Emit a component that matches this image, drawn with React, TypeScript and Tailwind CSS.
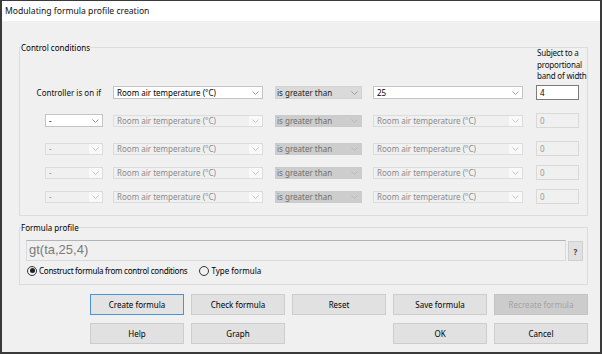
import React from "react";

type Kind = "on" | "op" | "off" | "opOff";

const Chevron = ({ color }: { color: string }) => (
  <svg width="7" height="4" viewBox="0 0 7 4">
    <path d="M0.5 0.5 L3.5 3.5 L6.5 0.5" fill="none" stroke={color} strokeWidth="1" />
  </svg>
);

const Combo = ({ text, kind, className }: { text: string; kind: Kind; className: string }) => {
  if (kind === "on") {
    return (
      <div className={`${className} h-[13px] flex items-center bg-white border border-[#c4c4c4] text-black`}>
        <span className="flex-1 pl-[3px] truncate leading-[11px]">{text}</span>
        <span className="w-[14px] flex justify-center">
          <Chevron color="#9a9a9a" />
        </span>
      </div>
    );
  }
  if (kind === "op") {
    return (
      <div className={`${className} h-[13px] flex items-center bg-[#dadada] border border-[#d2d2d2] text-[#222]`}>
        <span className="flex-1 pl-[1px] truncate leading-[11px]">{text}</span>
        <span className="w-[14px] flex justify-center">
          <Chevron color="#9a9a9a" />
        </span>
      </div>
    );
  }
  if (kind === "opOff") {
    return (
      <div className={`${className} h-[12px] flex items-center bg-[#cdcdcd] border border-[#cbcbcb] text-[#707070]`}>
        <span className="flex-1 pl-[1px] truncate leading-[10px]">{text}</span>
        <span className="w-[14px] flex justify-center">
          <Chevron color="#b8b8b8" />
        </span>
      </div>
    );
  }
  return (
    <div className={`${className} h-[12px] flex items-stretch bg-[#f0f0f0] border border-[#dcdcdc] text-[#8a8a8a]`}>
      <span className="flex-1 pl-[3px] truncate leading-[10px]">{text}</span>
      <span className="w-[13px] flex items-center justify-center bg-[#f9f9f9]">
        <Chevron color="#c4c4c4" />
      </span>
    </div>
  );
};

const Field = ({ value, on }: { value: string; on?: boolean }) => (
  <div
    className={
      on
        ? "ml-[13px] w-[43px] h-[15px] flex items-center pl-[3px] bg-white border border-[#7a7a7a] text-black"
        : "ml-[13px] w-[43px] h-[15px] flex items-center pl-[3px] bg-[#f0f0f0] border border-[#d9d9d9] text-[#9a9a9a]"
    }
  >
    {value}
  </div>
);

const Row = ({ first, on, value, className }: { first: React.ReactNode; on?: boolean; value: string; className: string }) => (
  <div className={`${className} flex items-center pl-[25px]`}>
    <div className="w-[58px] flex justify-end whitespace-nowrap">{first}</div>
    <Combo className="ml-[10px] w-[150px]" kind={on ? "on" : "off"} text="Room air temperature (°C)" />
    <Combo className="ml-[12px] w-[87px]" kind={on ? "op" : "opOff"} text="is greater than" />
    <Combo className="ml-[11px] w-[150px]" kind={on ? "on" : "off"} text={on ? "25" : "Room air temperature (°C)"} />
    <Field value={value} on={on} />
  </div>
);

const Btn = ({ label, focus, off }: { label: string; focus?: boolean; off?: boolean }) => (
  <button
    className={
      off
        ? "h-[21px] bg-[#cccccc] border border-[#c4c4c4] text-[#a3a3a3]"
        : focus
          ? "h-[21px] bg-[#e3e3e3] border border-[#4a93d6] text-black"
          : "h-[21px] bg-[#e1e1e1] border border-[#cdcdcd] text-black"
    }
  >
    {label}
  </button>
);

const Radio = ({ checked, label, tight }: { checked?: boolean; label: string; tight?: boolean }) => (
  <label className="flex items-center gap-[2px]">
    <span className="w-[10px] h-[10px] rounded-full border border-[#333] flex items-center justify-center">
      {checked && <span className="w-[5px] h-[5px] rounded-full bg-[#222]" />}
    </span>
    <span className={tight ? "tracking-[-0.25px]" : ""}>{label}</span>
  </label>
);

export default function App() {
  return (
    <div className="w-[602px] h-[354px] border-2 border-t border-[#3a3a3a] bg-[#f0f0f0] flex flex-col overflow-hidden font-['Noto_Sans',sans-serif] text-[8px] leading-[11px] text-black">
      <div className="h-[20px] shrink-0 bg-white flex items-center pl-[3px] text-[8.6px] text-[#111]">
        Modulating formula profile creation
      </div>

      <div className="flex flex-col pl-[17px] pr-[12px]">
        {/* Control conditions */}
        <div className="relative mt-[26px] h-[169px] border border-[#dcdcdc] flex flex-col">
          <span className="absolute left-[1px] -top-[6px] bg-[#f0f0f0] leading-[11px]">Control conditions</span>
          <div className="-mt-[1px] ml-[517px] whitespace-nowrap leading-[11.7px] tracking-[-0.2px] text-[#111]">
            Subject to a
            <br />
            proportional
            <br />
            band of width
          </div>
          <Row
            className="mt-[3px]"
            on
            value="4"
            first={<span className="mr-[2px] text-[#111]">Controller is on if</span>}
          />
          <Row className="mt-[13px]" value="0" first={<Combo className="w-[58px]" kind="on" text="-" />} />
          <Row className="mt-[13px]" value="0" first={<Combo className="w-[58px]" kind="off" text="-" />} />
          <Row className="mt-[9px]" value="0" first={<Combo className="w-[58px]" kind="off" text="-" />} />
          <Row className="mt-[9px]" value="0" first={<Combo className="w-[58px]" kind="off" text="-" />} />
        </div>

        {/* Formula profile */}
        <div className="relative mt-[11px] h-[58px] border border-[#dcdcdc] flex flex-col">
          <span className="absolute left-[1px] -top-[6px] bg-[#f0f0f0] leading-[11px]">Formula profile</span>
          <div className="mt-[12px] ml-[6px] flex items-start">
            <div className="w-[540px] h-[21px] border border-[#dadada] border-t-[#b4b4b4] bg-[#f0f0f0] pl-[2px] pt-[1px] font-['Liberation_Sans',Arial,sans-serif] text-[13px] leading-[15px] text-[#7b7b7b]">
              gt(ta,25,4)
            </div>
            <button className="ml-[2px] mt-[1px] w-[15px] h-[20px] bg-[#e1e1e1] border border-[#cfcfcf] text-[8px] font-bold text-[#444]">
              ?
            </button>
          </div>
          <div className="mt-[4px] ml-[7px] flex items-center gap-[12px]">
            <Radio checked tight label="Construct formula from control conditions" />
            <Radio label="Type formula" />
          </div>
        </div>

        {/* Buttons */}
        <div className="mt-[9px] ml-[71px] grid grid-cols-[repeat(5,94px)] gap-x-[7px] gap-y-[8px]">
          <Btn label="Create formula" focus />
          <Btn label="Check formula" />
          <Btn label="Reset" />
          <Btn label="Save formula" />
          <Btn label="Recreate formula" off />
          <Btn label="Help" />
          <Btn label="Graph" />
          <div />
          <Btn label="OK" />
          <Btn label="Cancel" />
        </div>
      </div>
    </div>
  );
}
